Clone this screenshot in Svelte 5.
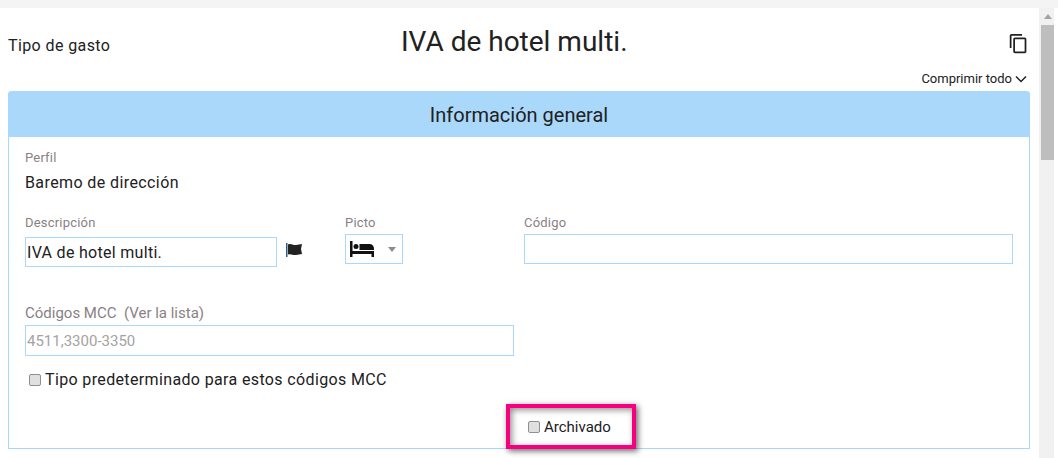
<script>
  let description = 'IVA de hotel multi.';
  let code = '';
  let mcc = '';
  let isDefault = false;
  let archived = false;
</script>

<div class="page">
  <main class="sheet">
    <header class="top">
      <span class="kind">Tipo de gasto</span>
      <h1>IVA de hotel multi.</h1>
      <button class="copy" type="button" aria-label="Copiar">
        <svg width="21" height="21" viewBox="0 0 24 24"><path fill="#212121" d="M16 1H4c-1.100 0-2 .9-2 2v14h2V3h12V1zm3 4H8c-1.100 0-2 .9-2 2v14c0 1.100.9 2 2 2h11c1.100 0 2-.9 2-2V7c0-1.100-.9-2-2-2zm0 16H8V7h11v14z"/></svg>
      </button>
    </header>

    <div class="collapse">
      Comprimir todo
      <svg width="14" height="14" viewBox="0 0 14 14"><path d="M2 4.500l5 5 5-5" fill="none" stroke="#212121" stroke-width="1.500"/></svg>
    </div>

    <section class="card">
      <h2>Información general</h2>
      <div class="body">
        <div class="profile">
          <span class="lbl">Perfil</span>
          <span class="val">Baremo de dirección</span>
        </div>

        <div class="row">
          <div class="desc">
            <label class="lbl" for="desc">Descripción</label>
            <div class="desc-line">
              <input id="desc" class="inp big" bind:value={description} />
              <svg class="flag" width="18" height="14" viewBox="0 0 18 14">
                <rect x="0" y="0" width="1.500" height="14" fill="#2b5c8a"/>
                <path d="M2 1.500c3-1.500 5 1 8 .5 2-.3 4-.8 6-1l-1 5 1 5c-2 .2-4 .5-6 1-3 .5-5-1.500-8-.5z" fill="#222"/>
              </svg>
            </div>
          </div>
          <div class="picto">
            <span class="lbl">Picto</span>
            <div class="select">
              <svg width="24" height="16" viewBox="0 0 24 16">
                <path fill="#111" d="M0 0h2.500v10H24v6h-2.500v-3h-19v3H0z"/>
                <circle cx="6" cy="5.500" r="2.500" fill="#111"/>
                <path fill="#111" d="M9.500 3h10c2.500 0 4.500 2 4.500 4.500V9H9.500z"/>
              </svg>
              <i class="caret"></i>
            </div>
          </div>
          <div class="code">
            <label class="lbl" for="code">Código</label>
            <input id="code" class="inp" bind:value={code} />
          </div>
        </div>

        <div class="mcc">
          <label class="lbl mcc-lbl" for="mcc">Códigos MCC &nbsp;(Ver la lista)</label>
          <input id="mcc" class="inp" placeholder="4511,3300-3350" bind:value={mcc} />
        </div>

        <label class="check default">
          <input type="checkbox" bind:checked={isDefault} />
          Tipo predeterminado para estos códigos MCC
        </label>

        <div class="archive">
          <label class="check marked">
            <input type="checkbox" bind:checked={archived} />
            Archivado
          </label>
        </div>
      </div>
    </section>
  </main>

  <aside class="scrollbar">
    <i class="up"></i>
    <div class="thumb"></div>
  </aside>
</div>

<style>
  :global(body) {
    background: #f4f4f4;
    overflow: hidden;
  }
  .page {
    height: 458px;
    padding-top: 8px;
    box-sizing: border-box;
    display: flex;
    font-family: Roboto, "Liberation Sans", sans-serif;
    color: #212121;
    overflow: hidden;
  }
  .sheet {
    width: 1039px;
    flex: none;
    background: #fff;
    padding: 0 9px 0 8px;
    box-sizing: border-box;
  }
  .top {
    height: 62px;
    display: grid;
    grid-template-columns: 393px auto 1fr;
    align-items: center;
  }
  .kind {
    font-size: 16px;
    letter-spacing: .4px;
    margin-top: 12px;
  }
  h1 {
    margin: 4px 0 0;
    font-size: 28px;
    font-weight: 400;
  }
  .copy {
    justify-self: end;
    margin: 8px 1px 0 0;
    padding: 0;
    border: 0;
    background: none;
    height: 21px;
  }
  .collapse {
    height: 17px;
    display: flex;
    justify-content: flex-end;
    align-items: center;
    gap: 2px;
    font-size: 13px;
    padding-right: 2px;
  }
  .card {
    margin-top: 4px;
    border: 1px solid #aad8fb;
    border-top: 0;
    border-radius: 4px 4px 0 0;
    height: 358px;
    box-sizing: border-box;
  }
  h2 {
    margin: 0 -1px;
    height: 46px;
    line-height: 48px;
    background: #aad8fb;
    border-radius: 4px 4px 0 0;
    text-align: center;
    font-size: 20px;
    font-weight: 400;
  }
  .body {
    padding: 13px 16px 0;
  }
  .lbl {
    display: block;
    font-size: 13px;
    letter-spacing: .2px;
    line-height: 16px;
    color: #8a7f85;
  }
  .val {
    display: block;
    font-size: 16px;
    letter-spacing: .4px;
    line-height: 20px;
    margin-top: 7px;
  }
  .row {
    display: flex;
    margin-top: 22px;
  }
  .desc { width: 320px; }
  .desc-line {
    display: flex;
    align-items: flex-start;
    margin-top: 6px;
  }
  .flag { margin: 6px 0 0 9px; }
  .picto { width: 179px; }
  .code { flex: 1; }
  .inp {
    display: block;
    box-sizing: border-box;
    width: 100%;
    height: 30px;
    margin-top: 3px;
    padding: 0 1px;
    border: 1px solid #aad8fb;
    outline: 0;
    font: inherit;
    font-size: 15px;
    color: #212121;
  }
  .inp::placeholder { color: #a3a3a3; opacity: 1; }
  .inp.big {
    width: 252px;
    margin-top: 0;
    font-size: 16px;
    letter-spacing: .3px;
  }
  .select {
    width: 58px;
    height: 30px;
    margin-top: 3px;
    box-sizing: border-box;
    border: 1px solid #aad8fb;
    display: flex;
    align-items: center;
    padding-left: 4px;
    gap: 14px;
  }
  .caret {
    width: 0;
    height: 0;
    border: 4px solid transparent;
    border-top: 5px solid #8c8c8c;
    border-bottom: 0;
  }
  .mcc {
    width: 489px;
    margin-top: 37px;
  }
  .mcc-lbl {
    font-size: 15px;
    letter-spacing: 0;
    line-height: 18px;
  }
  .mcc .inp {
    height: 31px;
    margin-top: 3px;
  }
  .check {
    display: flex;
    align-items: center;
    gap: 4px;
    font-size: 16px;
    letter-spacing: .36px;
    line-height: 20px;
  }
  .check input {
    appearance: none;
    width: 12px;
    height: 12px;
    margin: 0;
    box-sizing: border-box;
    background: #e0e0e0;
    border: 1px solid #8f8f8f;
    border-radius: 2px;
  }
  .default {
    margin: 14px 0 0 4px;
  }
  .archive {
    display: flex;
    padding-left: 481px;
    margin-top: 14px;
  }
  .marked {
    width: 130px;
    height: 45px;
    flex: none;
    box-sizing: border-box;
    padding-left: 18px;
    border: 4px solid #f7007f;
    box-shadow: 2px 2px 6px rgba(0, 0, 0, .6), inset 2px 2px 6px rgba(0, 0, 0, .45);
    background: #fff;
    font-size: 15px;
    letter-spacing: 0;
  }
  .scrollbar {
    flex: none;
    width: 13px;
    height: 100%;
    background: #f1f1f1;
    border-right: 4px solid #fff;
    padding-left: 2px;
  }
  .up {
    display: block;
    width: 0;
    margin: 6px auto 6px;
    border: 4px solid transparent;
    border-top: 0;
    border-bottom: 5px solid #a3a3a3;
  }
  .thumb {
    height: 135px;
    background: #bebebe;
  }
</style>
